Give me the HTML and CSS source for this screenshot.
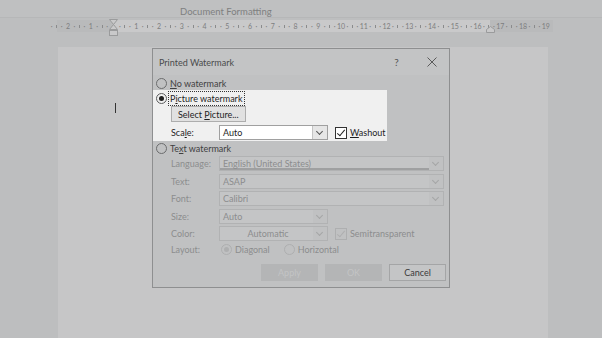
FILE: index.html
```html
<!DOCTYPE html>
<html lang="en">
<head>
    <meta charset="UTF-8">
    <title>Printed Watermark</title>
    <link rel="stylesheet" href="styles.css">
</head>
<body>
    <div class="topbar">
        <span class="doc-title">Document Formatting</span>
    </div>

    <div class="ruler-row">
        <div class="ruler">
            <div class="ruler-margin left"></div>
            <div class="ruler-margin right"></div>
            <div class="ruler-marks" id="ruler-marks"></div>
            <svg class="indent-marker" width="9" height="17" viewBox="0 0 9 17">
                <path d="M0.5 0.5 H8.5 L4.5 5.5 Z M4.5 5.5 L8.5 10.5 H0.5 Z" fill="#c9c9ca" stroke="#9a9b9c" stroke-width="1"/>
                <rect x="0.5" y="11.5" width="8" height="5" fill="#c9c9ca" stroke="#9a9b9c" stroke-width="1"/>
            </svg>
            <svg class="right-marker" width="9" height="7" viewBox="0 0 9 7">
                <path d="M0.5 6.5 V3.5 L4.5 0.5 L8.5 3.5 V6.5 Z" fill="#c9c9ca" stroke="#9a9b9c" stroke-width="1"/>
            </svg>
        </div>
    </div>

    <div class="workspace">
        <div class="page">
            <div class="caret"></div>
        </div>

        <div class="dialog">
            <div class="dialog-head">
                <span class="dialog-title">Printed Watermark</span>
                <span class="head-btn">?</span>
                <span class="head-btn close">
                    <svg width="10" height="10" viewBox="0 0 10 10"><path d="M0.5 0.5 L9.5 9.5 M9.5 0.5 L0.5 9.5" stroke="#5a5a5a" stroke-width="1" fill="none"/></svg>
                </span>
            </div>

            <div class="dialog-body">
                <label class="radio-row dim">
                    <span class="radio"></span>
                    <span><u>N</u>o watermark</span>
                </label>

                <div class="spotlight">
                    <label class="radio-row">
                        <span class="radio checked"></span>
                        <span class="focus">P<u>i</u>cture watermark</span>
                    </label>
                    <div class="indent">
                        <button class="btn">Select <u>P</u>icture...</button>
                    </div>
                    <div class="field-row indent">
                        <span class="field-label">Sca<u>l</u>e:</span>
                        <div class="combo small">
                            <span>Auto</span>
                            <span class="arrow"></span>
                        </div>
                        <label class="check-row">
                            <span class="checkbox on"></span>
                            <span><u>W</u>ashout</span>
                        </label>
                    </div>
                </div>

                <label class="radio-row dim">
                    <span class="radio"></span>
                    <span>Te<u>x</u>t watermark</span>
                </label>

                <div class="disabled-grid">
                    <span class="field-label">Language:</span>
                    <div class="combo wide off underline"><span>English (United States)</span><span class="arrow"></span></div>

                    <span class="field-label">Text:</span>
                    <div class="combo wide off"><span>ASAP</span><span class="arrow"></span></div>

                    <span class="field-label">Font:</span>
                    <div class="combo wide off"><span>Calibri</span><span class="arrow"></span></div>

                    <span class="field-label">Size:</span>
                    <div class="combo small off"><span>Auto</span><span class="arrow"></span></div>

                    <span class="field-label">Color:</span>
                    <div class="color-line">
                        <div class="combo small off center"><span>Automatic</span><span class="arrow"></span></div>
                        <label class="check-row off">
                            <span class="checkbox on"></span>
                            <span>Semitransparent</span>
                        </label>
                    </div>

                    <span class="field-label">Layout:</span>
                    <div class="layout-line">
                        <label class="mini-radio"><span class="radio checked off"></span>Diagonal</label>
                        <label class="mini-radio"><span class="radio off"></span>Horizontal</label>
                    </div>
                </div>

                <div class="button-row">
                    <button class="btn wide off">Apply</button>
                    <button class="btn wide off">OK</button>
                    <button class="btn wide cancel">Cancel</button>
                </div>
            </div>
        </div>
    </div>

    <script>
        // build the ruler: 2 units left of the indent, 19 after it
        const marks = document.getElementById('ruler-marks');
        const labels = [2, 1, 0];
        for (let i = 1; i <= 19; i++) labels.push(i);
        labels.forEach(n => {
            const unit = document.createElement('span');
            unit.className = 'unit';
            unit.innerHTML = '<span class="ticks"><i>·</i><i class="tick"></i><i>·</i></span><b><em>' + (n === 0 ? '' : n) + '</em></b>';
            marks.appendChild(unit);
        });
    </script>
</body>
</html>
```

FILE: styles.css
```css
body {
    margin: 0;
    width: 602px;
    height: 338px;
    overflow: hidden;
    background: #bdbebf;
    font-family: 'Lato', 'Noto Sans', sans-serif;
    font-size: 9px;
    color: #1e1e1e;
}

.topbar {
    height: 18px;
    padding-left: 180px;
    border-bottom: 1px solid #b6b7b8;
    background: #bfc0c1;
    box-sizing: border-box;
}

.doc-title {
    display: inline-block;
    line-height: 24px;
    font-size: 9.5px;
    color: #7e7f80;
}

.ruler-row {
    height: 29px;
    padding-top: 2px;
    box-sizing: border-box;
}

.ruler {
    position: relative;
    margin-left: 57px;
    width: 496px;
    height: 12px;
    background: #c9c9ca;
}

.ruler-margin {
    position: absolute;
    top: 0;
    bottom: 0;
    background: #b9babb;
}

.ruler-margin.left {
    left: 0;
    width: 57px;
}

.ruler-margin.right {
    right: 0;
    width: 63px;
}

.ruler-marks {
    position: relative;
    display: flex;
    height: 12px;
    margin-left: -11.75px;
}

.unit {
    display: flex;
    align-items: center;
    width: 22.75px;
    flex: none;
    font-size: 7px;
    color: #7d7e7f;
    line-height: 12px;
}

.ticks {
    flex: 1;
    display: flex;
    align-items: center;
    justify-content: space-evenly;
    padding: 0 2px;
}

.ticks i {
    font-style: normal;
}

.ticks .tick {
    width: 1px;
    height: 3px;
    background: #8a8b8c;
}

.unit b {
    font-weight: normal;
    width: 0;
    display: flex;
    justify-content: center;
}

.unit em {
    font-style: normal;
}

.indent-marker {
    position: absolute;
    left: 52px;
    top: -1px;
}

.right-marker {
    position: absolute;
    left: 429px;
    top: 6px;
}

.workspace {
    position: relative;
    height: 291px;
    padding-left: 58px;
}

.page {
    position: relative;
    width: 490px;
    height: 100%;
    background: #c6c6c7;
}

.caret {
    position: absolute;
    left: 57px;
    top: 56px;
    width: 1px;
    height: 10px;
    background: #333;
}

.dialog {
    position: absolute;
    left: 152px;
    top: 1px;
    width: 296px;
    height: 238px;
    border: 1px solid #8e8f90;
    background: #c0c1c2;
}

.dialog-head {
    display: flex;
    align-items: center;
    height: 26px;
    padding-left: 6px;
    background: #c3c4c5;
}

.dialog-title {
    flex: 1;
    color: #4a4b4c;
    font-size: 9px;
}

.head-btn {
    width: 35px;
    text-align: center;
    color: #555;
    font-size: 10px;
}

.head-btn.close {
    display: flex;
    justify-content: center;
}

.dialog-body {
    padding-top: 1px;
}

.radio-row {
    display: flex;
    align-items: center;
    gap: 3px;
    height: 14px;
    padding-left: 3px;
}

.radio-row.dim {
    color: #3f4041;
}

.radio {
    width: 9px;
    height: 9px;
    border: 1px solid #5c5d5e;
    border-radius: 50%;
    box-sizing: content-box;
    display: flex;
    align-items: center;
    justify-content: center;
    background: transparent;
}

.dim .radio {
    border-color: #6b6c6d;
}

.radio.checked::after {
    content: '';
    width: 5px;
    height: 5px;
    border-radius: 50%;
    background: #1e1e1e;
}

.radio.off {
    border-color: #aeafb0;
}

.radio.checked.off::after {
    background: #aeafb0;
}

.spotlight {
    width: 234px;
    height: 51px;
    padding-top: 1px;
    background: #f0f0f0;
    box-sizing: border-box;
}

.focus {
    outline: 1px dotted #333;
    outline-offset: 1px;
    padding-right: 1px;
}

.indent {
    margin-left: 18px;
}

.btn {
    font-family: inherit;
    font-size: 9px;
    color: #1e1e1e;
    height: 16px;
    padding: 0 6px;
    margin-top: 1px;
    border: 1px solid #adadad;
    background: #e1e1e1;
    line-height: 13px;
}

.field-row {
    display: flex;
    align-items: center;
    height: 15px;
    margin-top: 3px;
}

.field-label {
    width: 48px;
}

.combo {
    display: flex;
    align-items: center;
    justify-content: space-between;
    height: 15px;
    border: 1px solid #a0a0a0;
    background: #ffffff;
    box-sizing: border-box;
    padding-left: 3px;
}

.combo.small {
    width: 109px;
}

.combo.wide {
    width: 225px;
}

.arrow {
    width: 14px;
    height: 13px;
    border-left: 1px solid #c4c4c4;
    background: #e6e6e6;
    position: relative;
}

.arrow::after {
    content: '';
    position: absolute;
    left: 4px;
    top: 3px;
    width: 4px;
    height: 4px;
    border-right: 1px solid #555;
    border-bottom: 1px solid #555;
    transform: rotate(45deg);
}

.check-row {
    display: flex;
    align-items: center;
    gap: 3px;
    margin-left: 7px;
}

.checkbox {
    width: 10px;
    height: 10px;
    border: 1px solid #333;
    position: relative;
    background: #fff;
}

.checkbox.on::after {
    content: '';
    position: absolute;
    left: 3px;
    top: 0;
    width: 3px;
    height: 7px;
    border-right: 1px solid #222;
    border-bottom: 1px solid #222;
    transform: rotate(40deg);
}

.disabled-grid {
    display: grid;
    grid-template-columns: 48px auto;
    row-gap: 2.5px;
    align-items: center;
    margin: 1px 0 0 18px;
    color: #8c8d8e;
}

.combo.off {
    border-color: #b1b2b3;
    background: #c4c5c6;
    color: #8c8d8e;
}

.combo.off .arrow {
    border-left: none;
    background: #c0c1c2;
}

.combo.off .arrow::after {
    border-color: #a4a5a6;
}

.combo.underline {
    box-shadow: inset 0 -2px 0 #9fa0a1;
}

.combo.center span:first-child {
    flex: 1;
    text-align: center;
}

.color-line {
    display: flex;
    align-items: center;
}

.check-row.off .checkbox {
    border-color: #aeafb0;
    background: transparent;
}

.check-row.off .checkbox::after {
    border-color: #aeafb0;
}

.layout-line {
    display: flex;
    align-items: center;
    gap: 14px;
    height: 12px;
    padding-left: 2px;
}

.mini-radio {
    display: flex;
    align-items: center;
    gap: 3px;
}

.button-row {
    display: flex;
    justify-content: flex-end;
    gap: 7px;
    padding: 7px 3px 0 0;
}

.btn.wide {
    width: 57px;
    height: 17px;
}

.btn.off {
    background: #b4b5b6;
    border-color: #b4b5b6;
    color: #c3c4c5;
}

.btn.cancel {
    background: #c4c5c6;
    border-color: #a4a5a6;
    color: #3a3a3a;
}
```
